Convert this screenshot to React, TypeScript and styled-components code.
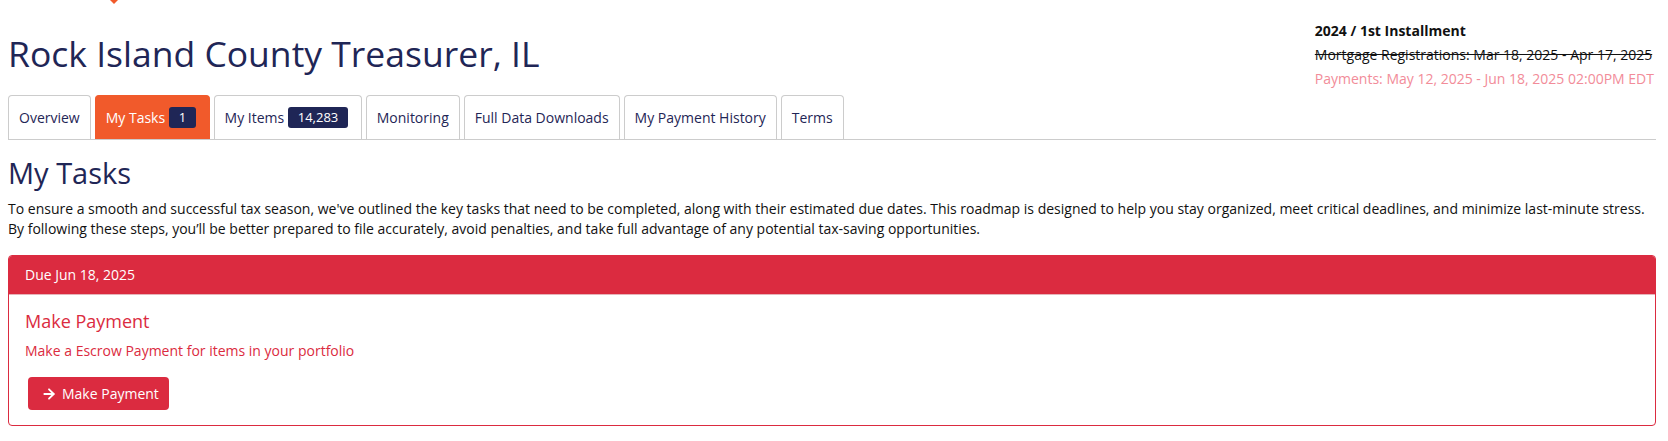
import React from "react";
import styled, { createGlobalStyle } from "styled-components";
import { ArrowRight } from "lucide-react";

const GlobalStyle = createGlobalStyle`
  html, body {
    margin: 0;
    padding: 0;
    background: #ffffff;
  }
  body {
    font-family: "Open Sans", "Liberation Sans", Arial, sans-serif;
    font-size: 14px;
    line-height: 20px;
    color: #111111;
  }
  * { box-sizing: border-box; }
`;

const navy = "#1f2656";
const red = "#db2b40";
const orange = "#f15a2b";

const Page = styled.div`
  padding: 0 12px 0 8px;
`;

const TopStrip = styled.div`
  height: 4px;
  display: flex;
  padding-left: 102px;
`;

const HeaderRow = styled.div`
  display: flex;
  justify-content: space-between;
  align-items: flex-start;
`;

const Title = styled.h1`
  margin: 28px 0 0;
  font-size: 35.5px;
  line-height: 43px;
  font-weight: 400;
  color: ${navy};
`;

const Installment = styled.div`
  margin-top: 15px;
  padding-right: 2px;
  display: flex;
  flex-direction: column;
  font-size: 14px;
  line-height: 24px;
  white-space: nowrap;
`;

const InstallmentLine = styled.div<{ $variant?: "bold" | "struck" | "pink" }>`
  color: ${(p) => (p.$variant === "pink" ? "#f28c99" : "#111111")};
  font-weight: ${(p) => (p.$variant === "bold" ? 700 : 400)};
  text-decoration: ${(p) => (p.$variant === "struck" ? "line-through" : "none")};
`;

const Tabs = styled.nav`
  margin-top: 4px;
  display: flex;
  gap: 4px;
  border-bottom: 1px solid #cccccc;
`;

const Tab = styled.div<{ $active?: boolean }>`
  height: 44px;
  display: flex;
  align-items: center;
  gap: 4px;
  padding: 0 10px;
  border: 1px solid ${(p) => (p.$active ? orange : "#cccccc")};
  border-bottom: none;
  border-radius: 4px 4px 0 0;
  background: ${(p) => (p.$active ? orange : "#ffffff")};
  color: ${(p) => (p.$active ? "#ffffff" : navy)};
  font-size: 14px;
  white-space: nowrap;
`;

const Badge = styled.span`
  display: inline-flex;
  align-items: center;
  justify-content: center;
  min-width: 26px;
  height: 21px;
  padding: 0 9.5px;
  margin-right: 3px;
  border-radius: 3px;
  background: ${navy};
  color: #ffffff;
  font-size: 13px;
  line-height: 21px;
`;

const SectionTitle = styled.h2`
  margin: 17px 0 0;
  font-size: 29px;
  line-height: 31px;
  font-weight: 400;
  color: ${navy};
`;

const Intro = styled.p`
  margin: 11px 0 0;
  font-size: 14px;
  line-height: 20px;
  color: #111111;
`;

const Card = styled.section`
  margin-top: 16px;
  border: 1px solid ${red};
  border-radius: 4px;
  overflow: hidden;
`;

const CardHeader = styled.div`
  height: 39px;
  padding: 9px 16px 0;
  background: ${red};
  color: #ffffff;
  font-size: 14px;
  font-weight: 500;
  line-height: 20px;
  border-bottom: 1px solid #e6b3b9;
`;

const CardBody = styled.div`
  padding: 16px 16px 15px;
  display: flex;
  flex-direction: column;
  align-items: flex-start;
`;

const TaskTitle = styled.h3`
  margin: 0;
  font-size: 18px;
  line-height: 20px;
  font-weight: 400;
  color: ${red};
`;

const TaskText = styled.p`
  margin: 10px 0 0;
  font-size: 14px;
  line-height: 20px;
  color: ${red};
`;

const ActionButton = styled.button`
  margin: 16px 0 0 3px;
  height: 33px;
  display: inline-flex;
  align-items: center;
  gap: 5px;
  padding: 0 10px 0 13px;
  border: none;
  border-radius: 4px;
  background: ${red};
  color: #ffffff;
  font-family: "Open Sans", "Liberation Sans", Arial, sans-serif;
  font-size: 14px;
  line-height: 20px;
  cursor: pointer;
`;

const tabs: { label: string; badge?: string; active?: boolean }[] = [
  { label: "Overview" },
  { label: "My Tasks", badge: "1", active: true },
  { label: "My Items", badge: "14,283" },
  { label: "Monitoring" },
  { label: "Full Data Downloads" },
  { label: "My Payment History" },
  { label: "Terms" },
];

export default function App() {
  return (
    <Page>
      <GlobalStyle />
      <TopStrip>
        <svg width="8" height="4" viewBox="0 0 8 4">
          <polygon points="0,0 8,0 4,4" fill={orange} />
        </svg>
      </TopStrip>
      <HeaderRow>
        <Title>Rock Island County Treasurer, IL</Title>
        <Installment>
          <InstallmentLine $variant="bold">2024 / 1st Installment</InstallmentLine>
          <InstallmentLine $variant="struck">
            Mortgage Registrations: Mar 18, 2025 - Apr 17, 2025
          </InstallmentLine>
          <InstallmentLine $variant="pink">
            Payments: May 12, 2025 - Jun 18, 2025 02:00PM EDT
          </InstallmentLine>
        </Installment>
      </HeaderRow>
      <Tabs>
        {tabs.map((t) => (
          <Tab key={t.label} $active={t.active}>
            {t.label}
            {t.badge && <Badge>{t.badge}</Badge>}
          </Tab>
        ))}
      </Tabs>
      <SectionTitle>My Tasks</SectionTitle>
      <Intro>
        To ensure a smooth and successful tax season, we've outlined the key tasks that need to be
        completed, along with their estimated due dates. This roadmap is designed to help you stay
        organized, meet critical deadlines, and minimize last-minute stress. By following these steps,
        you’ll be better prepared to file accurately, avoid penalties, and take full advantage of any
        potential tax-saving opportunities.
      </Intro>
      <Card>
        <CardHeader>Due Jun 18, 2025</CardHeader>
        <CardBody>
          <TaskTitle>Make Payment</TaskTitle>
          <TaskText>Make a Escrow Payment for items in your portfolio</TaskText>
          <ActionButton>
            <ArrowRight size={16} strokeWidth={2.75} />
            Make Payment
          </ActionButton>
        </CardBody>
      </Card>
    </Page>
  );
}
